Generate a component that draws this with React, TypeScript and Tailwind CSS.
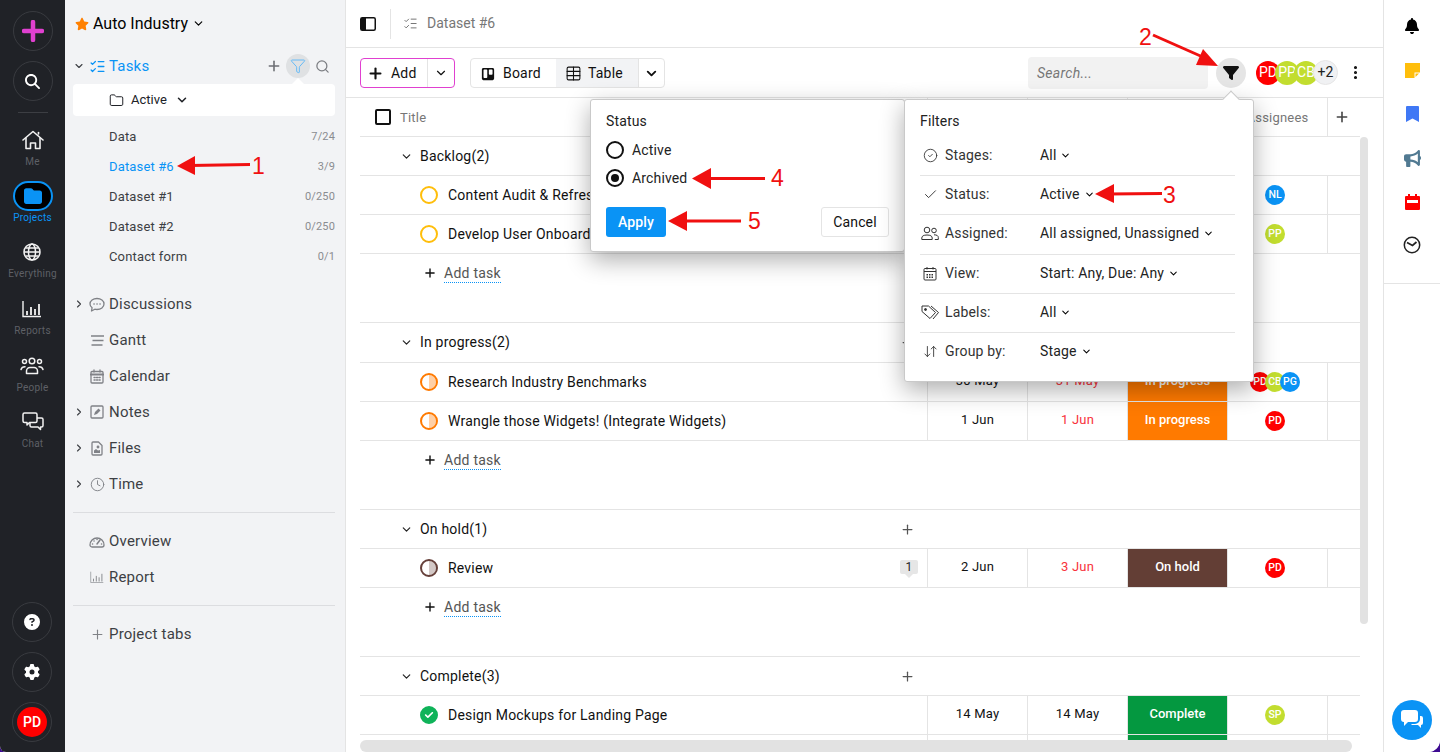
import React from "react";
import { Plus, ChevronDown, ChevronRight, ListChecks, Funnel, Search, Folder, Clock, CircleCheck, Check, ArrowDownUp, EllipsisVertical, Table } from "lucide-react";
import { FaStar, FaBell, FaBullhorn, FaCircleQuestion, FaGear, FaFilter, FaFolder, FaMagnifyingGlass, FaTrello, FaCircleCheck } from "react-icons/fa6";

const RED = "#ff0000", LIME = "#c2dd2f", BLUE = "#0a93f5";

const HomeIcon = () => (
  <svg width="22" height="20" viewBox="0 0 22 20" fill="none" stroke="currentColor" strokeWidth="1.6" strokeLinejoin="round" strokeLinecap="round">
    <path d="M1 10 11 1.500 21 10" />
    <path d="M4 8v10.500h4.500V13h5v5.500H18V8" />
    <path d="M16.500 4V2.500" />
  </svg>
);
const PeopleIcon = () => (
  <svg width="24" height="18" viewBox="0 0 24 18" fill="none" stroke="currentColor" strokeWidth="1.500" strokeLinecap="round">
    <circle cx="12" cy="4" r="2.800" />
    <circle cx="4.500" cy="4.500" r="2" />
    <circle cx="19.500" cy="4.500" r="2" />
    <path d="M6.500 16.500v-2.500a3.500 3.500 0 0 1 3.500-3.500h4a3.500 3.500 0 0 1 3.500 3.500v2.500z" strokeLinejoin="round" />
    <path d="M1 12.500c.500-2 1.800-2.800 4-2.800M23 12.500c-.500-2-1.800-2.800-4-2.800" />
  </svg>
);
const ChatIcon = () => (
  <svg width="22" height="20" viewBox="0 0 22 20" fill="none" stroke="currentColor" strokeWidth="1.500" strokeLinejoin="round">
    <path d="M2.500 1h11a1.500 1.500 0 0 1 1.500 1.500V9A1.500 1.500 0 0 1 13.500 10.500H7.500L5 13v-2.500H2.500A1.500 1.500 0 0 1 1 9V2.500A1.500 1.500 0 0 1 2.500 1z" />
    <path d="M15 6h4.500A1.500 1.500 0 0 1 21 7.500v6a1.500 1.500 0 0 1-1.500 1.500h-1v2.500L16 15H9.500A1.500 1.500 0 0 1 8 13.500V10.500" />
  </svg>
);
const BarsIcon = ({ s = 20, w = 1.400 }: { s?: number; w?: number }) => (
  <svg width={s} height={s * 0.9} viewBox="0 0 20 18" fill="none" stroke="currentColor" strokeWidth={w}>
    <path d="M1 1v15.500h18" />
    <path d="M5 15v-4M9 15V7M13 15v-6M17 15V4" strokeWidth={w + 0.4} />
  </svg>
);
const G = ({ w, h, children }: { w: number; h: number; children: React.ReactNode }) => (
  <svg width={w} height={h} viewBox={`0 0 ${w} ${h}`} fill="none" stroke="currentColor" strokeWidth="1.300" strokeLinejoin="round" strokeLinecap="round">{children}</svg>
);
const DiscIcon = () => (
  <G w={16} h={15}><path d="M8 1.500c3.900 0 7 2.400 7 5.500s-3.100 5.500-7 5.500c-.8 0-1.500-.1-2.200-.3L2.500 14l.6-3.300C1.800 9.700 1 8.400 1 7c0-3.100 3.100-5.500 7-5.500z" /><path d="M5 7h.1M8 7h.1M11 7h.1" strokeWidth="1.600" /></G>
);
const GanttIcon = () => (
  <G w={15} h={13}><path d="M1 2h13M2.500 6.500h11M1.500 11h11" strokeWidth="1.500" strokeLinecap="butt" /></G>
);
const CalIcon = () => (
  <G w={14} h={15}><rect x="1" y="2.500" width="12" height="11.500" rx="1" /><path d="M1 5.500h12" strokeWidth="2.200" /><path d="M4 1v2M10 1v2" /><path d="M4 8.500h1.200M6.500 8.500h1.200M9 8.500h1.200M4 11h1.200M6.500 11h1.200M9 11h1.200" /></G>
);
const NoteIcon = () => (
  <G w={14} h={14}><rect x="1" y="1" width="12" height="12" rx="1" /><path d="M4 10l1-3 3.500-3.500 2 2L7 9z" fill="currentColor" stroke="none" /></G>
);
const FileIcon = () => (
  <G w={12} h={15}><path d="M1 2a1 1 0 0 1 1-1h5.500L11 4.500V13a1 1 0 0 1-1 1H2a1 1 0 0 1-1-1z" /><circle cx="7" cy="6" r="0.800" fill="currentColor" /><path d="M3 12V9.500l2-1.500 2 1.500 2-.5V12z" fill="currentColor" stroke="none" /></G>
);
const GaugeIcon = () => (
  <G w={16} h={13}><path d="M3 12a2 2 0 0 1-2-2 7 7 0 0 1 14 0 2 2 0 0 1-2 2z" /><path d="M8 9l3-4" strokeWidth="1.500" /><path d="M3.500 9h.1M5 6h.1M8 4.500h.1M12.500 9h.1" strokeWidth="1.500" /></G>
);
const TwoUsers = () => (
  <svg width="18" height="15" viewBox="0 0 18 15" fill="none" stroke="#333" strokeWidth="1" strokeLinejoin="round">
    <circle cx="6" cy="4" r="2.800" />
    <path d="M.8 13.500v-1.500c0-2 1.800-3 5.200-3s5.200 1 5.200 3v1.500z" />
    <circle cx="13" cy="4.500" r="2.300" />
    <path d="M13 8.800c2.800 0 4.300.9 4.300 2.700v2h-3.500" />
  </svg>
);
const CalSmall = () => (
  <svg width="14" height="15" viewBox="0 0 14 15" fill="none" stroke="#333" strokeWidth="1">
    <rect x="1" y="2.500" width="12" height="11.500" rx="1" />
    <path d="M1 5.500h12" /><path d="M4 1v2.500M10 1v2.500" />
    <path d="M3.500 8.500h7M3.500 10h7M3.500 11.500h7" strokeWidth="1" strokeDasharray="1.500 1" />
  </svg>
);
const TagsIcon = () => (
  <svg width="19" height="15" viewBox="0 0 19 15" fill="none" stroke="#333" strokeWidth="1" strokeLinejoin="round">
    <path d="M1 1h6.500l7 6.500-5.500 6L1 6.500z" />
    <path d="M10 1l7.500 6.500-5.500 6.500" />
    <circle cx="4.500" cy="4.500" r="1" fill="#333" />
  </svg>
);

function RailItem({ icon, label, active }: { icon: React.ReactNode; label: string; active?: boolean }) {
  return (
    <div className="flex h-[56px] flex-col items-center">
      <div className="flex h-[24px] items-center justify-center text-[#f2f2f2]">{icon}</div>
      <div className={`mt-[3px] text-[10px] leading-[14px] tracking-[0.25px] ${active ? "text-[#0a93f5]" : "text-[#5e6066]"}`}>{label}</div>
    </div>
  );
}

function Circle({ children }: { children: React.ReactNode }) {
  return <div className="flex h-[40px] w-[40px] items-center justify-center rounded-full border border-[#393b40]">{children}</div>;
}

function Rail() {
  return (
    <div className="flex w-[65px] shrink-0 flex-col items-center bg-[#202227] pt-[11px]">
      <Circle>
        <svg width="22" height="22" viewBox="0 0 22 22"><path d="M11 2v18M2 11h18" stroke="#e040d0" strokeWidth="4.500" strokeLinecap="round" /></svg>
      </Circle>
      <div className="mt-[10px]"><Circle><FaMagnifyingGlass size={15} color="#fff" /></Circle></div>
      <div className="mt-[11px] mb-[15px] h-px w-[30px] bg-[#3c3e43]" />
      <RailItem icon={<HomeIcon />} label="Me" />
      <RailItem
        active
        label="Projects"
        icon={<div className="-mt-[1px] flex h-[30px] w-[40px] items-center justify-center rounded-full border-2 border-[#0a93f5] bg-black"><FaFolder size={18} color={BLUE} /></div>}
      />
      <RailItem icon={<svg width="18" height="18" viewBox="0 0 18 18" fill="none" stroke="currentColor" strokeWidth="1.500"><circle cx="9" cy="9" r="8" /><path d="M1 9h16M2.500 5h13M2.500 13h13" /><ellipse cx="9" cy="9" rx="3.500" ry="8" /></svg>} label="Everything" />
      <div className="mt-[1px]"><RailItem icon={<BarsIcon />} label="Reports" /></div>
      <div className="mt-[1px] -mb-[1px]"><RailItem icon={<PeopleIcon />} label="People" /></div>
      <div className="mt-[1px]"><RailItem icon={<ChatIcon />} label="Chat" /></div>
      <div className="mt-auto mr-[1px] flex flex-col gap-[10px] pb-[10px]">
        <Circle><FaCircleQuestion size={16} color="#fff" /></Circle>
        <Circle><FaGear size={16} color="#fff" /></Circle>
        <Circle><div className="flex h-[30px] w-[30px] items-center justify-center rounded-full bg-[#ff0000] text-[14px] font-medium text-white">PD</div></Circle>
      </div>
    </div>
  );
}

function NavRow({ chevron, icon, label }: { chevron?: boolean; icon: React.ReactNode; label: string }) {
  return (
    <div className="flex h-[36px] items-center text-[15px] tracking-[0.2px] text-[#3d3f44]">
      <div className="flex w-[12px] justify-center">{chevron && <ChevronRight size={14} strokeWidth={2.2} className="text-[#3d3f44]" />}</div>
      <div className="flex w-[24px] justify-center text-[#808287]">{icon}</div>
      <span>{label}</span>
    </div>
  );
}

function SideItem({ label, count, active }: { label: string; count: string; active?: boolean }) {
  return (
    <div className="flex h-[30px] items-center justify-between pl-[36px] text-[13px] tracking-[0.15px]">
      <span className={active ? "text-[#0a93f5]" : "text-[#3d3f44]"}>{label}</span>
      <span className="text-[11px] text-[#8a8c90]">{count}</span>
    </div>
  );
}

function Sidebar() {
  return (
    <div className="flex w-[280px] shrink-0 flex-col bg-[#f2f3f5] pl-[8px] pr-[10px]">
      <div className="flex h-[47px] items-center pl-[2px] text-[16px] text-black">
        <FaStar size={14} color="#ff8000" />
        <span className="ml-[4px]">Auto Industry</span>
        <ChevronDown size={13} strokeWidth={2.2} className="ml-[4px]" />
      </div>
      <div className="relative flex h-[38px] items-center">
        <div className="flex w-[12px] justify-center"><ChevronDown size={14} strokeWidth={2.2} className="text-[#3d3f44]" /></div>
        <div className="flex w-[24px] justify-center text-[#0a93f5]"><ListChecks size={17} strokeWidth={1.8} /></div>
        <span className="text-[15px] tracking-[0.2px] text-[#0a93f5]">Tasks</span>
        <div className="ml-auto flex items-center">
          <Plus size={16} strokeWidth={2.4} className="text-[#6d6f74]" />
          <div className="relative ml-[4px] flex h-[24px] w-[24px] items-center justify-center rounded-full bg-[#dfe1e3]">
            <Funnel size={16} strokeWidth={1.4} className="text-[#5cb7f7]" />
            <div className="absolute left-[6px] top-[24px] h-0 w-0 border-x-[6px] border-b-[6px] border-x-transparent border-b-white" />
          </div>
          <Search size={15} className="ml-[5px] mr-[5px] text-[#7b7d82]" />
        </div>
      </div>
      <div className="-mt-[1px] flex h-[32px] items-center rounded-[4px] bg-white pl-[36px] text-[13px] text-[#202227]">
        <Folder size={15} strokeWidth={1.6} />
        <span className="ml-[7px]">Active</span>
        <ChevronDown size={14} strokeWidth={2.6} className="ml-[8px]" />
      </div>
      <div className="mt-[6px]">
        <SideItem label="Data" count="7/24" />
        <SideItem label="Dataset #6" count="3/9" active />
        <SideItem label="Dataset #1" count="0/250" />
        <SideItem label="Dataset #2" count="0/250" />
        <SideItem label="Contact form" count="0/1" />
      </div>
      <div className="mt-[14px]">
        <NavRow chevron icon={<DiscIcon />} label="Discussions" />
        <NavRow icon={<GanttIcon />} label="Gantt" />
        <NavRow icon={<CalIcon />} label="Calendar" />
        <NavRow chevron icon={<NoteIcon />} label="Notes" />
        <NavRow chevron icon={<FileIcon />} label="Files" />
        <NavRow chevron icon={<Clock size={15} strokeWidth={1.5} />} label="Time" />
      </div>
      <div className="mt-[10px] h-px bg-[#dcdde0]" />
      <div className="mt-[10px]">
        <NavRow icon={<GaugeIcon />} label="Overview" />
        <NavRow icon={<BarsIcon s={14} w={0.9} />} label="Report" />
      </div>
      <div className="mt-[10px] h-px bg-[#dcdde0]" />
      <div className="mt-[10px]">
        <NavRow icon={<Plus size={15} strokeWidth={1.8} />} label="Project tabs" />
      </div>
    </div>
  );
}

function Av({ t, c, size = 20 }: { t: string; c: string; size?: number }) {
  return (
    <div
      className={`flex shrink-0 items-center justify-center overflow-hidden rounded-full text-white ${size === 24 ? "h-[24px] w-[24px] text-[14px]" : "h-[20px] w-[20px] text-[10.5px] font-medium"}`}
      style={{ backgroundColor: c }}
    >
      {t}
    </div>
  );
}

type Kind = "todo" | "prog" | "hold" | "done";

function StatusDot({ kind }: { kind: Kind }) {
  if (kind === "done") return <FaCircleCheck size={18} color="#0fb359" />;
  if (kind === "todo") return <div className="h-[18px] w-[18px] rounded-full border-2 border-[#ffbe0b]" />;
  const c = kind === "prog" ? "#ff7a00" : "#66403a";
  const f = kind === "prog" ? "#ffd0a6" : "#d3c8c6";
  return (
    <svg width="18" height="18" viewBox="0 0 18 18">
      <path d="M9 2a7 7 0 0 1 0 14z" fill={f} />
      <circle cx="9" cy="9" r="8" fill="none" stroke={c} strokeWidth="2" />
    </svg>
  );
}

const cols = "grid h-[39px] grid-cols-[567px_100px_100px_100px_100px_33px] border-b border-[#e4e4e4]";
const cell = "flex items-center justify-center border-l border-[#e4e4e4] text-[13px]";

function TaskRow({ kind, title, start, due, dueRed, stage, stageColor, who, badge }: {
  kind: Kind; title: string; start?: string; due?: string; dueRed?: boolean; stage?: string; stageColor: string; who?: React.ReactNode; badge?: boolean;
}) {
  return (
    <div className={cols}>
      <div className="flex items-center pl-[60px] pr-[9px] text-[14px] tracking-[0.2px] text-[#111]">
        <StatusDot kind={kind} />
        <span className="ml-[10px]">{title}</span>
        {badge && (
          <div className="relative ml-auto -mt-[2px] flex h-[14px] w-[18px] items-center justify-center rounded-[2px] bg-[#e6e6e6] text-[12px] text-[#222]">
            1
            <div className="absolute left-[5px] top-[14px] h-0 w-0 border-x-[4px] border-t-[4px] border-x-transparent border-t-[#e6e6e6]" />
          </div>
        )}
      </div>
      <div className={`${cell} pb-[2px] tracking-[0.2px] text-[#111]`}>{start}</div>
      <div className={`${cell} pb-[2px] tracking-[0.2px] ${dueRed ? "text-[#f8323c]" : "text-[#111]"}`}>{due}</div>
      <div className="border-l border-[#e4e4e4]">
        <div className="flex h-full items-center justify-center pb-[2px] text-[13px] font-medium text-white" style={{ backgroundColor: stageColor }}>{stage}</div>
      </div>
      <div className={`${cell} pr-[5px]`}>{who}</div>
      <div className={cell} />
    </div>
  );
}

function GroupRow({ label, tall }: { label: string; tall?: boolean }) {
  return (
    <div className={`flex items-center border-b border-[#e4e4e4] pl-[40px] pr-[445px] ${tall ? "h-[40px]" : "h-[39px]"}`}>
      <ChevronDown size={13} strokeWidth={2.2} className="text-[#222]" />
      <span className="ml-[7px] text-[14px] tracking-[0.2px] text-[#111]">{label}</span>
      <Plus size={15} strokeWidth={2} className="ml-auto text-[#555]" />
    </div>
  );
}

function AddTask() {
  return (
    <div className="flex h-[69px] items-start border-b border-[#e4e4e4] pl-[63px] pt-[10px]">
      <Plus size={14} strokeWidth={2.4} className="mt-[2px] text-[#111]" />
      <span className="ml-[7px] border-b border-dotted border-[#0a93f5] text-[14px] leading-[18px] tracking-[0.25px] text-[#555]">Add task</span>
    </div>
  );
}

function Stack({ list }: { list: [string, string][] }) {
  return (
    <div className="flex">
      {list.map(([t, c], i) => (
        <div key={t} className={i ? "-ml-[5px]" : ""}><Av t={t} c={c} /></div>
      ))}
    </div>
  );
}

function TableArea() {
  return (
    <div className="relative min-h-0 flex-1 overflow-hidden pl-[14px]">
      <div className="w-[1000px]">
        <div className={cols}>
          <div className="flex items-center pl-[15px] text-[13px] text-[#777]">
            <div className="h-[16px] w-[16px] rounded-[2px] border-2 border-[#111]" />
            <span className="ml-[9px] pt-[2px] tracking-[0.2px]">Title</span>
          </div>
          <div className={cell} />
          <div className={cell} />
          <div className={cell} />
          <div className={`${cell} pt-[2px] tracking-[0.2px] text-[#777]`}>Assignees</div>
          <div className={`${cell} pr-[4px]`}><Plus size={16} strokeWidth={2.4} className="text-[#444]" /></div>
        </div>
        <GroupRow label="Backlog(2)" />
        <TaskRow kind="todo" title="Content Audit & Refresh" stageColor="#ffbe0b" who={<Av t="NL" c={BLUE} />} />
        <TaskRow kind="todo" title="Develop User Onboarding" stageColor="#ffbe0b" who={<Av t="PP" c={LIME} />} />
        <AddTask />
        <GroupRow label="In progress(2)" tall />
        <TaskRow kind="prog" title="Research Industry Benchmarks" start="30 May" due="31 May" dueRed stage="In progress" stageColor="#ff7a00" who={<Stack list={[["PD", RED], ["CB", LIME], ["PG", BLUE]]} />} />
        <TaskRow kind="prog" title="Wrangle those Widgets! (Integrate Widgets)" start="1 Jun" due="1 Jun" dueRed stage="In progress" stageColor="#ff7a00" who={<Av t="PD" c={RED} />} />
        <AddTask />
        <GroupRow label="On hold(1)" />
        <TaskRow kind="hold" title="Review" start="2 Jun" due="3 Jun" dueRed stage="On hold" stageColor="#633e35" who={<Av t="PD" c={RED} />} badge />
        <AddTask />
        <GroupRow label="Complete(3)" />
        <TaskRow kind="done" title="Design Mockups for Landing Page" start="14 May" due="14 May" stage="Complete" stageColor="#049840" who={<Av t="SP" c={LIME} />} />
        <TaskRow kind="done" title="" stageColor="#049840" />
      </div>
      <div className="absolute left-[1014px] top-[39px] h-[487px] w-[8px] rounded-full bg-[#e2e2e2]" />
      <div className="absolute bottom-0 left-[14px] h-[12px] w-[992px] rounded-full bg-[#e2e2e2]" />
    </div>
  );
}

function Toolbar() {
  return (
    <div className="flex h-[50px] items-center border-b border-[#e4e4e4] pl-[14px] pr-[18px]">
      <div className="flex h-[30px] w-[95px] items-center rounded-[4px] border border-[#e040d0] text-[14px] tracking-[0.2px] text-[#111]">
        <Plus size={17} strokeWidth={3} className="ml-[6px] mt-[1px]" />
        <span className="ml-[7px] pt-[2px]">Add</span>
        <div className="ml-auto flex h-full w-[27px] items-center justify-center border-l border-[#e4e4e4] pt-[1px]"><ChevronDown size={14} strokeWidth={2} /></div>
      </div>
      <div className="ml-[15px] flex h-[30px] w-[195px] items-center overflow-hidden rounded-[4px] border border-[#e4e4e4] pt-0 text-[14px] tracking-[0.2px] text-[#111]">
        <div className="flex h-full w-[85px] items-center pl-[10px] pt-[2px]">
          <FaTrello size={14} color="#111" />
          <span className="ml-[8px]">Board</span>
        </div>
        <div className="flex h-full w-[82px] items-center bg-[#f2f3f5] pl-[9px] pt-[2px]">
          <Table size={17} strokeWidth={1.5} />
          <span className="ml-[6px]">Table</span>
        </div>
        <div className="flex h-full flex-1 items-center justify-center border-l border-[#e4e4e4] pt-[1px]"><ChevronDown size={15} strokeWidth={3} /></div>
      </div>
      <div className="ml-auto flex h-[32px] w-[180px] items-center rounded-[4px] bg-[#f2f2f2] pl-[9px] pt-[2px] text-[14px] italic tracking-[0.3px] text-[#777]">Search...</div>
      <div className="ml-[8px] flex h-[30px] w-[30px] items-center justify-center rounded-full bg-[#e5e5e5]"><FaFilter size={16} color="#111" /></div>
      <div className="ml-[10px] flex items-center">
        <Av t="PD" c={RED} size={24} />
        <div className="-ml-[5px]"><Av t="PP" c={LIME} size={24} /></div>
        <div className="-ml-[5px]"><Av t="CB" c={LIME} size={24} /></div>
        <div className="-ml-[5px] flex h-[25px] w-[25px] items-center justify-center rounded-full border border-[#e6e6e6] bg-[#f0f1f3] text-[14px] text-[#222]">+2</div>
      </div>
      <div className="ml-[7px] flex w-[20px] justify-center"><EllipsisVertical size={17} strokeWidth={2.4} className="text-[#111]" /></div>
    </div>
  );
}

function Main() {
  return (
    <div className="flex min-w-0 flex-1 flex-col border-l border-[#e4e4e4] bg-white">
      <div className="flex h-[48px] items-center border-b border-[#e4e4e4]">
        <svg width="16" height="14" viewBox="0 0 16 14" className="ml-[14px]">
          <rect x="0.75" y="0.75" width="14.5" height="12.5" rx="1.5" fill="none" stroke="#111" strokeWidth="1.5" />
          <rect x="1" y="1" width="5" height="12" fill="#111" />
        </svg>
        <div className="ml-[14px] h-[30px] w-px bg-[#e4e4e4]" />
        <ListChecks size={15} strokeWidth={1.6} className="ml-[12px] text-[#777]" />
        <span className="ml-[9px] text-[14px] text-[#777]">Dataset #6</span>
      </div>
      <Toolbar />
      <TableArea />
    </div>
  );
}

function RightRail() {
  return (
    <div className="flex w-[57px] shrink-0 flex-col border-l border-[#e4e4e4] bg-white">
      <div className="flex h-[284px] flex-col items-center border-b border-[#e4e4e4] pt-[17px]">
        <div className="flex h-[18px] items-center"><FaBell size={16} color="#000" /></div>
        <div className="mt-[26px] flex h-[18px] items-center">
          <svg width="15" height="15" viewBox="0 0 15 15"><rect width="15" height="15" fill="#ffbe0b" /><path d="M15 9.500H9.500V15H15z" fill="#fff" /><path d="M10.500 10.500H14L10.500 14z" fill="#ffbe0b" /></svg>
        </div>
        <div className="mt-[26px] flex h-[18px] items-center">
          <svg width="13" height="16" viewBox="0 0 13 16"><path d="M1 0h11a1 1 0 0 1 1 1v15l-6.500-3.500L0 16V1a1 1 0 0 1 1-1z" fill="#3f78f5" /></svg>
        </div>
        <div className="mt-[26px] flex h-[18px] items-center"><FaBullhorn size={17} color="#517a92" /></div>
        <div className="mt-[26px] flex h-[18px] items-center">
          <svg width="15" height="16" viewBox="0 0 15 16"><path d="M3 0h2v2h5V0h2v2h2a1 1 0 0 1 1 1v12a1 1 0 0 1-1 1H1a1 1 0 0 1-1-1V3a1 1 0 0 1 1-1h2z" fill="#ff0000" /><rect x="2" y="6" width="11" height="3" fill="#fff" /></svg>
        </div>
        <div className="mt-[25px] flex h-[18px] items-center">
          <svg width="18" height="18" viewBox="0 0 18 18"><circle cx="9" cy="9" r="7.700" fill="none" stroke="#222" strokeWidth="1.500" /><path d="M4 6.500 9.500 9.500l4-3.500" fill="none" stroke="#222" strokeWidth="1.700" /></svg>
        </div>
      </div>
      <div className="mt-auto mb-[12px] flex justify-center">
        <div className="flex h-[40px] w-[40px] items-center justify-center rounded-full bg-[#0a93f5]">
          <svg width="24" height="22" viewBox="0 0 24 22">
            <path d="M4 1h11a3 3 0 0 1 3 3v6a3 3 0 0 1-3 3H8l-4 4v-4a3 3 0 0 1-3-3V4a3 3 0 0 1 3-3z" fill="#fff" />
            <path d="M20 7h1a2 2 0 0 1 2 2v5a2 2 0 0 1-2 2v3l-3-3h-6l-1-1h4a5 5 0 0 0 5-5z" fill="#fff" />
          </svg>
        </div>
      </div>
    </div>
  );
}

const pop = "absolute rounded-[3px] border border-[#c9c9c9] bg-white shadow-[0_8px_24px_rgba(0,0,0,0.32)]";

function StatusPopover() {
  return (
    <div className={`${pop} left-[590px] top-[99px] h-[153px] w-[315px] px-[15px] pt-[10px] text-[14px] tracking-[0.15px] text-[#222]`}>
      <div className="h-[20px] pt-[1px] leading-[20px]">Status</div>
      <div className="mt-[11px] flex h-[18px] items-center">
        <div className="h-[18px] w-[18px] rounded-full border-2 border-[#111]" />
        <span className="ml-[8px]">Active</span>
      </div>
      <div className="mt-[10px] flex h-[18px] items-center">
        <div className="flex h-[18px] w-[18px] items-center justify-center rounded-full border-2 border-[#111]"><div className="h-[8px] w-[8px] rounded-full bg-[#111]" /></div>
        <span className="ml-[8px]">Archived</span>
      </div>
      <div className="mt-[20px] flex items-center justify-between">
        <div className="flex h-[30px] w-[60px] items-center justify-center rounded-[3px] bg-[#0a93f5] font-medium text-white">Apply</div>
        <div className="flex h-[30px] w-[68px] items-center justify-center rounded-[3px] border border-[#e4e4e4] text-[#111]">Cancel</div>
      </div>
    </div>
  );
}

function FilterRow({ icon, label, value, h, border = true }: { icon: React.ReactNode; label: string; value: string; h: string; border?: boolean }) {
  return (
    <div className={`flex items-center ${h} ${border ? "border-b border-[#e4e4e4]" : ""}`}>
      <div className="flex w-[20px] justify-center text-[#333]">{icon}</div>
      <div className="ml-[5px] w-[95px] text-[#333]">{label}</div>
      <span className="text-[#222]">{value}</span>
      <ChevronDown size={11} strokeWidth={2.2} className="ml-[4px]" />
    </div>
  );
}

function FilterPopover() {
  return (
    <div className={`${pop} left-[904px] top-[99px] h-[283px] w-[350px]`}>
      <div className="absolute left-[320px] top-[-7px] h-[12px] w-[12px] rotate-45 border-l border-t border-[#c9c9c9] bg-white" />
      <div className="relative w-[330px] pl-[15px] pt-[10px] text-[14px] tracking-[0.17px]">
        <div className="h-[26px] pt-[1px] leading-[20px] text-[#222]">Filters</div>
        <FilterRow h="h-[40px]" icon={<CircleCheck size={15} strokeWidth={1.4} />} label="Stages:" value="All" />
        <FilterRow h="h-[39px] pb-[2px]" icon={<Check size={15} strokeWidth={1.5} />} label="Status:" value="Active" />
        <FilterRow h="h-[40px] pb-[2px]" icon={<TwoUsers />} label="Assigned:" value="All assigned, Unassigned" />
        <FilterRow h="h-[39px] pb-[2px]" icon={<CalSmall />} label="View:" value="Start: Any, Due: Any" />
        <FilterRow h="h-[39px] pb-[2px]" icon={<TagsIcon />} label="Labels:" value="All" />
        <FilterRow h="h-[39px] pb-[2px]" border={false} icon={<ArrowDownUp size={15} strokeWidth={1.4} />} label="Group by:" value="Stage" />
      </div>
    </div>
  );
}

function Arrows() {
  const num = { fill: "#f01010", fontSize: 23, fontFamily: "'Liberation Sans', Arial, sans-serif" };
  const L = (x1: number, y1: number, x2: number, y2: number) => <line x1={x1} y1={y1} x2={x2} y2={y2} stroke="#f01010" strokeWidth="3" />;
  return (
    <svg className="pointer-events-none absolute left-0 top-0" width="1440" height="752">
      {L(190, 165.500, 250, 164.500)}
      <polygon points="177,166 195,156 195,175" fill="#f01010" />
      <text x="252" y="174" {...num}>1</text>
      {L(1153, 35, 1205, 58)}
      <polygon points="1218,66 1203,49 1196,65" fill="#f01010" />
      <text x="1139" y="45" {...num}>2</text>
      {L(1108, 194, 1162, 193.500)}
      <polygon points="1095,194 1114,184 1114,203" fill="#f01010" />
      <text x="1163" y="203" {...num}>3</text>
      {L(705, 178.500, 765, 178.500)}
      <polygon points="692,178.500 711,168 711,189" fill="#f01010" />
      <text x="771" y="186" {...num}>4</text>
      {L(682, 221, 741, 221)}
      <polygon points="668,221 687,211 687,231" fill="#f01010" />
      <text x="748" y="229" {...num}>5</text>
    </svg>
  );
}

export default function App() {
  return (
    <div className="relative h-[752px] w-[1440px] overflow-hidden bg-[#3d0a91] font-['Roboto',sans-serif]">
      <div className="flex h-full overflow-hidden rounded-bl-[6px] rounded-br-[12px] bg-white">
        <Rail />
        <Sidebar />
        <Main />
        <RightRail />
      </div>
      <StatusPopover />
      <FilterPopover />
      <Arrows />
    </div>
  );
}
